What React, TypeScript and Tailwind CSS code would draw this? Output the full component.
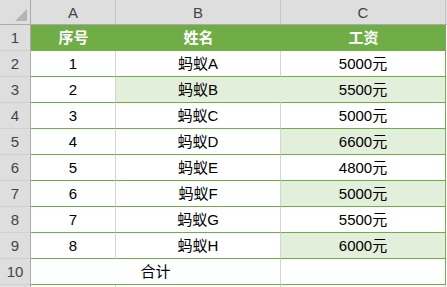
import React from "react";

type Row = { n: number; name: string; pay: string; bHi: boolean; cHi: boolean };

const rows: Row[] = [
  { n: 1, name: "蚂蚁A", pay: "5000元", bHi: false, cHi: false },
  { n: 2, name: "蚂蚁B", pay: "5500元", bHi: true, cHi: true },
  { n: 3, name: "蚂蚁C", pay: "5000元", bHi: false, cHi: false },
  { n: 4, name: "蚂蚁D", pay: "6600元", bHi: false, cHi: true },
  { n: 5, name: "蚂蚁E", pay: "4800元", bHi: false, cHi: false },
  { n: 6, name: "蚂蚁F", pay: "5000元", bHi: false, cHi: true },
  { n: 7, name: "蚂蚁G", pay: "5500元", bHi: false, cHi: false },
  { n: 8, name: "蚂蚁H", pay: "6000元", bHi: false, cHi: true },
];

const font = { fontFamily: '"Liberation Sans", "Noto Sans CJK SC", sans-serif' };

function RowHead({ label }: { label: string }) {
  return (
    <div className="h-[26px] flex items-center justify-center bg-[#dedede] border-r border-b border-r-[#ababab] border-b-[#d0d0d0] text-[15px] text-[#444444]">
      {label}
    </div>
  );
}

export default function App() {
  return (
    <div className="w-[447px] h-[287px] overflow-hidden bg-white" style={font}>
      <div className="grid grid-cols-[31px_85px_165px_165px_1px] leading-none">
        {/* column header row */}
        <div className="h-[25px] bg-[#dedede] border-r border-b border-r-[#ababab] border-b-[#ababab] relative">
          <svg className="absolute right-[3px] bottom-[3px]" width="12" height="12" viewBox="0 0 12 12">
            <polygon points="12,0 12,12 0,12" fill="#b4b4b4" />
          </svg>
        </div>
        <div className="h-[25px] bg-[#dedede] border-r border-b border-r-[#c6c6c6] border-b-[#ababab] flex items-center justify-center text-[15px] text-[#444444]">A</div>
        <div className="h-[25px] bg-[#dedede] border-r border-b border-r-[#c6c6c6] border-b-[#ababab] flex items-center justify-center text-[15px] text-[#444444]">B</div>
        <div className="h-[25px] bg-[#dedede] border-r border-b border-r-[#c6c6c6] border-b-[#ababab] flex items-center justify-center text-[15px] text-[#444444]">C</div>
        <div className="h-[25px] bg-[#dedede] border-b border-b-[#ababab]" />

        {/* row 1 header */}
        <RowHead label="1" />
        <div className="h-[26px] bg-[#70ad47] border-b border-b-[#70ad47] flex items-center justify-center text-[15px] font-bold text-white">序号</div>
        <div className="h-[26px] bg-[#70ad47] border-b border-b-[#70ad47] flex items-center justify-center text-[15px] font-bold text-white">姓名</div>
        <div className="h-[26px] bg-[#70ad47] border-b border-b-[#70ad47] flex items-center justify-center text-[15px] font-bold text-white">工资</div>
        <div className="h-[26px] bg-white" />

        {rows.map((r) => (
          <React.Fragment key={r.n}>
            <RowHead label={String(r.n + 1)} />
            <div className="h-[26px] bg-white border-r border-b border-r-[#d4d4d4] border-b-[#70ad47] flex items-center justify-center text-[15px] text-black">
              {r.n}
            </div>
            <div
              className={
                r.bHi
                  ? "h-[26px] bg-[#e2efda] border-r border-b border-r-[#e2efda] border-b-[#70ad47] flex items-center justify-center text-[15px] text-black"
                  : "h-[26px] bg-white border-r border-b border-r-[#d4d4d4] border-b-[#70ad47] flex items-center justify-center text-[15px] text-black"
              }
            >
              {r.name}
            </div>
            <div
              className={
                r.cHi
                  ? "h-[26px] bg-[#e2efda] border-r border-b border-r-[#70ad47] border-b-[#70ad47] flex items-center justify-center text-[15px] text-black"
                  : "h-[26px] bg-white border-r border-b border-r-[#70ad47] border-b-[#70ad47] flex items-center justify-center text-[15px] text-black"
              }
            >
              {r.pay}
            </div>
            <div className="h-[26px] bg-white" />
          </React.Fragment>
        ))}

        {/* row 10 */}
        <RowHead label="10" />
        <div className="col-span-2 h-[26px] bg-white border-r border-b border-r-[#d4d4d4] border-b-[#70ad47] flex items-center justify-center text-[15px] text-black">
          合计
        </div>
        <div className="h-[26px] bg-white border-r border-b border-r-[#70ad47] border-b-[#70ad47]" />
        <div className="h-[26px] bg-white" />

        {/* row 11 partial (only a sliver visible) */}
        <div className="h-[26px] bg-[#dedede] border-r border-r-[#ababab]" />
        <div className="h-[26px] bg-white border-r border-r-[#d4d4d4]" />
        <div className="h-[26px] bg-white border-r border-r-[#d4d4d4]" />
        <div className="h-[26px] bg-white border-r border-r-[#d4d4d4]" />
        <div className="h-[26px] bg-white" />
      </div>
    </div>
  );
}
